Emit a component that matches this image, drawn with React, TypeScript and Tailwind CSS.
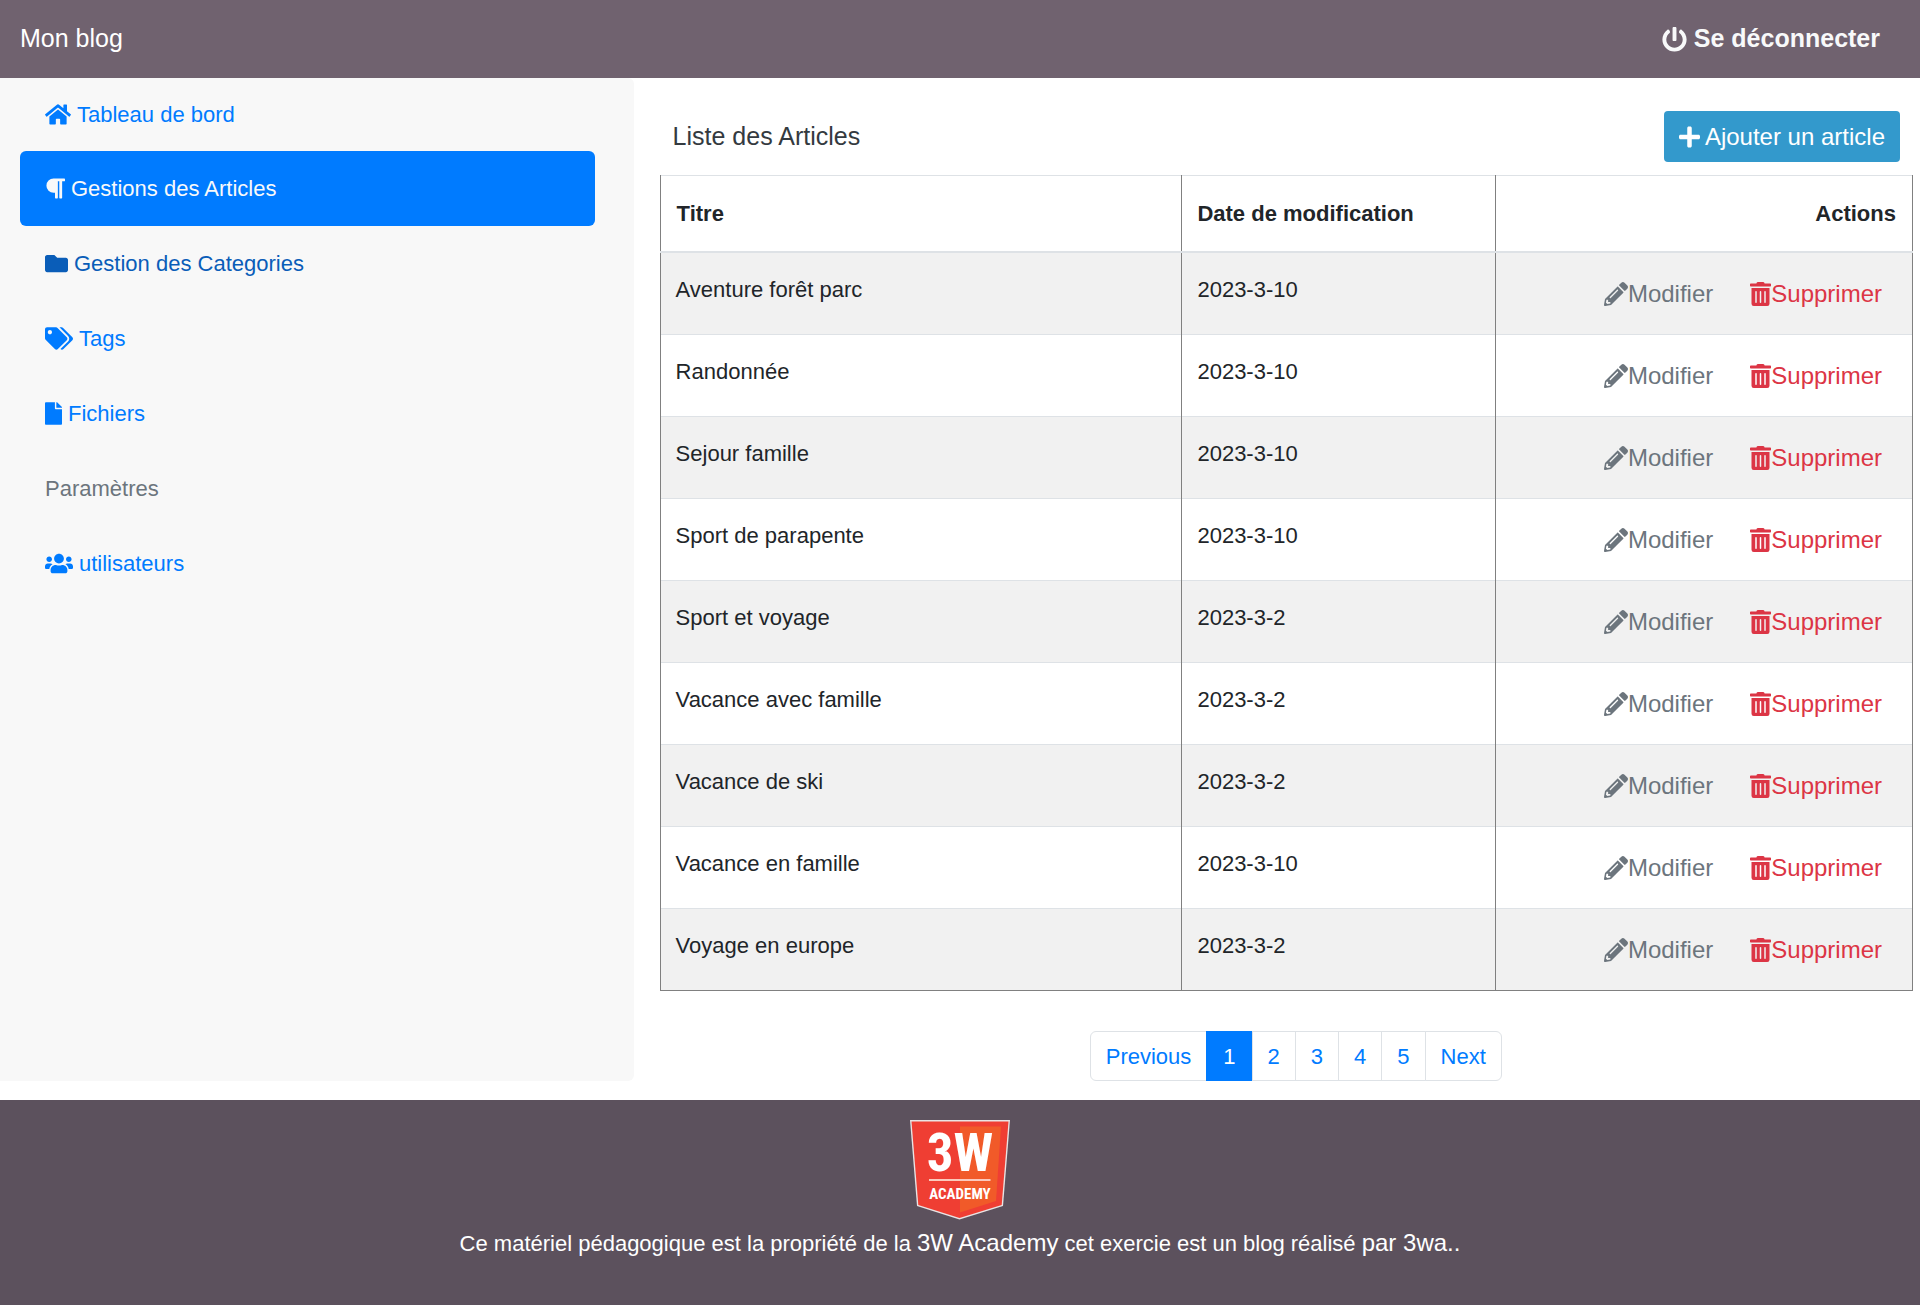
import React from 'react';
import {
  FaFile,
  FaFolder,
  FaHome,
  FaParagraph,
  FaPencilAlt,
  FaPlus,
  FaPowerOff,
  FaTags,
  FaTrashAlt,
  FaUsers,
} from 'react-icons/fa';
import type { IconType } from 'react-icons';

type NavItem = { label: string; icon?: IconType; iconSize?: string; tone: string };

const navItems: NavItem[] = [
  { label: 'Tableau de bord', icon: FaHome, iconSize: 'w-[26px] h-[23px]', tone: 'text-[#007bff]' },
  {
    label: 'Gestions des Articles',
    icon: FaParagraph,
    iconSize: 'w-5 h-[23px]',
    tone: 'rounded-md bg-[#007bff] text-[#f8f9fa]',
  },
  { label: 'Gestion des Categories', icon: FaFolder, iconSize: 'w-[23px] h-[23px]', tone: 'text-[#0a5db8]' },
  { label: 'Tags', icon: FaTags, iconSize: 'w-[28px] h-[23px]', tone: 'text-[#007bff]' },
  { label: 'Fichiers', icon: FaFile, iconSize: 'w-[17px] h-[23px]', tone: 'text-[#007bff]' },
  { label: 'Paramètres', tone: 'text-[#6c757d]' },
  { label: 'utilisateurs', icon: FaUsers, iconSize: 'w-[28px] h-[23px]', tone: 'text-[#007bff]' },
];

const articles = [
  { title: 'Aventure forêt parc', date: '2023-3-10' },
  { title: 'Randonnée', date: '2023-3-10' },
  { title: 'Sejour famille', date: '2023-3-10' },
  { title: 'Sport de parapente', date: '2023-3-10' },
  { title: 'Sport et voyage', date: '2023-3-2' },
  { title: 'Vacance avec famille', date: '2023-3-2' },
  { title: 'Vacance de ski', date: '2023-3-2' },
  { title: 'Vacance en famille', date: '2023-3-10' },
  { title: 'Voyage en europe', date: '2023-3-2' },
];

const pages = ['Previous', '1', '2', '3', '4', '5', 'Next'];

function Header() {
  return (
    <header className="flex h-[78px] items-center justify-between bg-[#70626f] px-5 text-[25px] text-white">
      <a href="#">Mon blog</a>
      <a href="#" className="mr-5 flex items-center gap-[7px] font-bold text-[#f8f9fa]">
        <FaPowerOff className="h-[25px] w-[25px]" />
        Se déconnecter
      </a>
    </header>
  );
}

function Sidebar() {
  return (
    <nav className="w-[33%] rounded-r-md bg-[#f8f8f8] pr-[39px] pl-5">
      <ul>
        {navItems.map(({ label, icon: Icon, iconSize, tone }) => (
          <li key={label} className="group">
            <a
              href="#"
              className={`flex h-[75px] items-center gap-1.5 px-[25px] text-[22px] group-first:h-[73px] ${tone}`}
            >
              {Icon && <Icon className={iconSize} />}
              {label}
            </a>
          </li>
        ))}
      </ul>
    </nav>
  );
}

function ArticleTable() {
  return (
    <table className="w-full table-fixed border-collapse border-b border-[#808080] text-[22px] leading-[45px] text-[#212529]">
      <thead>
        <tr className="border-t border-b-2 border-t-[#dee2e6] border-b-[#dee2e6] text-left">
          <th className="w-5/12 border-x border-x-[#808080] px-4 py-[15px]">Titre</th>
          <th className="w-3/12 border-x border-x-[#808080] px-[15px] py-[15px]">Date de modification</th>
          <th className="w-4/12 border-x border-x-[#808080] px-4 py-[15px] text-right">Actions</th>
        </tr>
      </thead>
      <tbody>
        {articles.map(({ title, date }) => (
          <tr key={title} className="border-t border-[#dee2e6] align-top odd:bg-[#f1f1f1]">
            <td className="border-x border-x-[#808080] px-[15px] py-3.5">{title}</td>
            <td className="border-x border-x-[#808080] px-[15px] py-3.5">{date}</td>
            <td className="border-x border-x-[#808080] px-[15px] py-[15px]">
              <div className="flex h-[51px] justify-end gap-[7px] text-2xl leading-9">
                <button type="button" className="flex items-center px-[15px] text-[#6c757d]">
                  <FaPencilAlt className="h-6 w-6" />
                  Modifier
                </button>
                <button type="button" className="flex items-center px-[15px] text-[#dc3545]">
                  <FaTrashAlt className="h-6 w-[21px]" />
                  Supprimer
                </button>
              </div>
            </td>
          </tr>
        ))}
      </tbody>
    </table>
  );
}

function Pagination() {
  return (
    <nav aria-label="Pagination" className="mt-10 flex justify-center pl-5">
      <ul className="flex h-[50px] rounded-md text-[22px]">
        {pages.map((page) => (
          <li key={page} className="group -ml-px flex">
            <a
              href="#"
              aria-current={page === '1' ? 'page' : undefined}
              className="flex items-center border border-[#dee2e6] bg-white px-[15px] text-[#007bff] group-first:rounded-l-md group-last:rounded-r-md aria-[current=page]:border-[#007bff] aria-[current=page]:bg-[#007bff] aria-[current=page]:px-4 aria-[current=page]:text-white"
            >
              {page}
            </a>
          </li>
        ))}
      </ul>
    </nav>
  );
}

function Logo() {
  return (
    <svg viewBox="0 0 100 100" className="h-[100px] w-[100px]" role="img" aria-label="3W Academy">
      <path d="M0 0H100L93 86L49.500 99.500L7 86Z" fill="#e9e4e4" />
      <path d="M1.500 1.500H98.500L91.700 85L49.500 98L8.300 85Z" fill="#ef3e33" />
      <path d="M50 6.500H91L86 81L50 92.500Z" fill="#f15a29" />
      <path d="M19 59H80.500V61H19Z" fill="#fbc9bd" />
      <text
        x="50"
        y="51"
        textAnchor="middle"
        fontSize="53"
        fontWeight="700"
        fill="#fff"
        fontFamily="'Roboto Condensed','Open Sans Condensed','Liberation Sans Narrow','DejaVu Sans Condensed',sans-serif"
      >
        3W
      </text>
      <text
        x="50"
        y="79"
        textAnchor="middle"
        fontSize="15"
        fontWeight="700"
        fill="#fff"
        fontFamily="'Roboto Condensed','Open Sans Condensed','Liberation Sans Narrow','DejaVu Sans Condensed',sans-serif"
      >
        ACADEMY
      </text>
    </svg>
  );
}

export default function App() {
  return (
    <div className="flex min-h-screen flex-col bg-white font-['Liberation_Sans',Arial,sans-serif]">
      <Header />
      <div className="flex">
        <Sidebar />
        <main className="flex-1 pr-[7px] pl-[26px]">
          <div className="flex items-center justify-between pt-[33px] pr-[13px] pb-[13px] pl-[13px]">
            <h1 className="text-[25px] text-[#343a40]">Liste des Articles</h1>
            <button
              type="button"
              className="flex h-[51px] items-center gap-[5px] rounded bg-[#3399cc] px-[15px] text-2xl text-white"
            >
              <FaPlus className="h-6 w-[21px]" />
              Ajouter un article
            </button>
          </div>
          <ArticleTable />
          <Pagination />
        </main>
      </div>
      <footer className="mt-[19px] flex flex-1 flex-col items-center bg-[#5c515d] pt-5 text-white">
        <Logo />
        <p className="pt-1 text-[22px] leading-10">
          Ce matériel pédagogique est la propriété de la <span className="text-2xl">3W Academy</span> cet exercie est un
          blog réalisé <span className="text-2xl">par 3wa..</span>
        </p>
      </footer>
    </div>
  );
}
